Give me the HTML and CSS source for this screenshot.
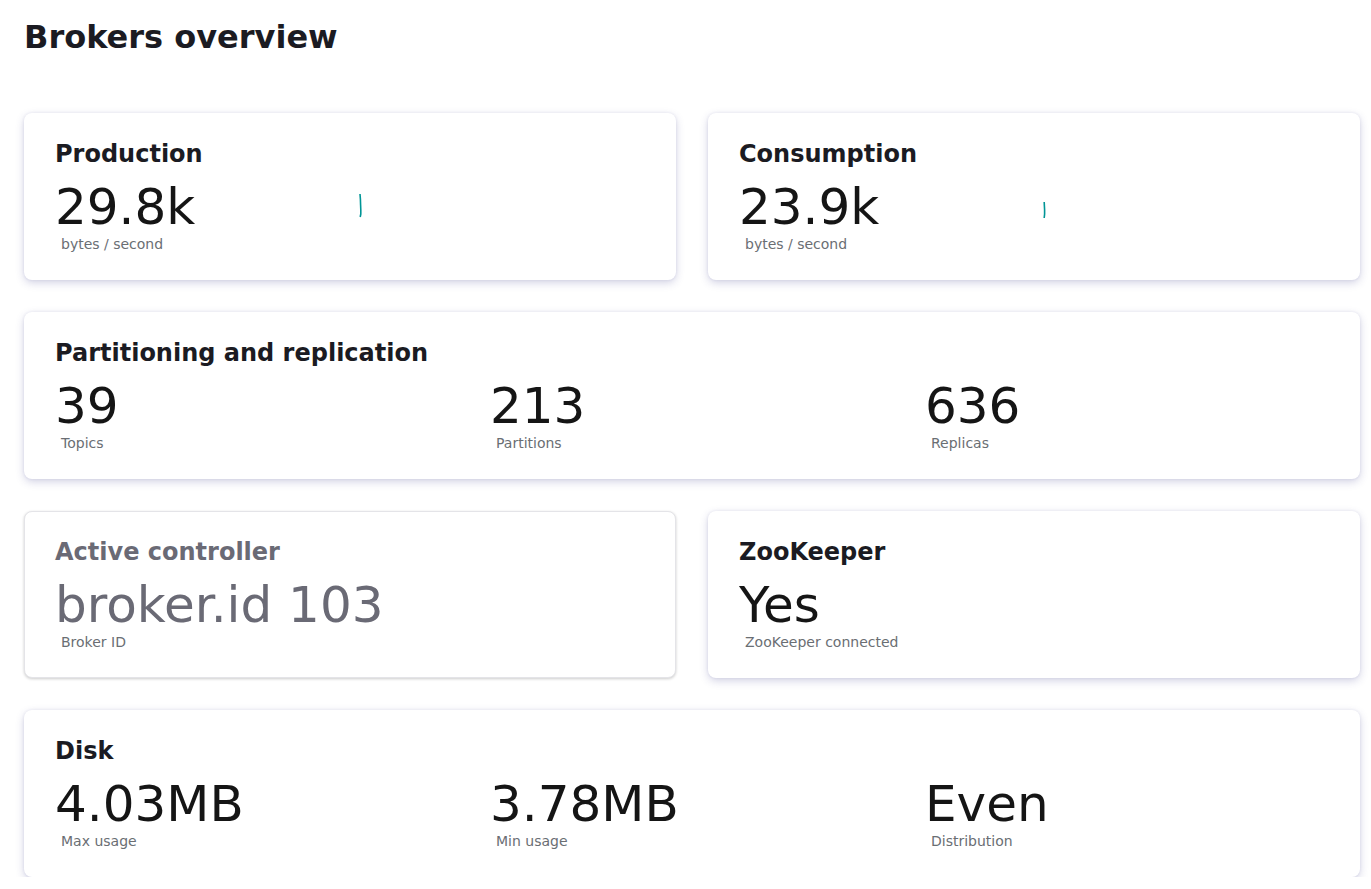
FILE: index.html
```html
<!DOCTYPE html>
<html lang="en">
<head>
<meta charset="utf-8">
<title>Brokers overview</title>
<link rel="stylesheet" href="styles.css">
</head>
<body>
<main class="page">
  <h1 class="page-title">Brokers overview</h1>
  <div class="grid">
    <section class="card">
      <h2 class="card-title">Production</h2>
      <div class="split">
        <div>
          <div class="value">29.8k</div>
          <div class="sub">bytes / second</div>
        </div>
        <div class="chart">
          <svg class="spark spark-a" width="6" height="26" viewBox="0 0 6 26"><polyline points="2,1 2.4,6 2.6,12 2.8,17 2.8,21 2.2,24" fill="none" stroke="#009596" stroke-width="1.6" stroke-linejoin="round"/></svg>
        </div>
      </div>
    </section>
    <section class="card">
      <h2 class="card-title">Consumption</h2>
      <div class="split">
        <div>
          <div class="value">23.9k</div>
          <div class="sub">bytes / second</div>
        </div>
        <div class="chart">
          <svg class="spark spark-b" width="6" height="18" viewBox="0 0 6 18"><polyline points="2.2,1 2.4,5 2.6,9 2.6,13 2.2,17" fill="none" stroke="#009596" stroke-width="1.6" stroke-linejoin="round"/></svg>
        </div>
      </div>
    </section>
    <section class="card wide">
      <h2 class="card-title">Partitioning and replication</h2>
      <div class="cols">
        <div><div class="value">39</div><div class="sub">Topics</div></div>
        <div><div class="value">213</div><div class="sub">Partitions</div></div>
        <div><div class="value">636</div><div class="sub">Replicas</div></div>
      </div>
    </section>
    <section class="card disabled">
      <h2 class="card-title">Active controller</h2>
      <div class="value">broker.id 103</div>
      <div class="sub">Broker ID</div>
    </section>
    <section class="card">
      <h2 class="card-title">ZooKeeper</h2>
      <div class="value">Yes</div>
      <div class="sub">ZooKeeper connected</div>
    </section>
    <section class="card wide">
      <h2 class="card-title">Disk</h2>
      <div class="cols">
        <div><div class="value">4.03MB</div><div class="sub">Max usage</div></div>
        <div><div class="value">3.78MB</div><div class="sub">Min usage</div></div>
        <div><div class="value">Even</div><div class="sub">Distribution</div></div>
      </div>
    </section>
  </div>
</main>
</body>
</html>
```

FILE: styles.css
```css
html, body {
  margin: 0;
  padding: 0;
  background: #ffffff;
}
body {
  font-family: "DejaVu Sans", "Liberation Sans", sans-serif;
  color: #151515;
}
.page {
  padding: 17px 11px 0 24px;
}
.page-title {
  margin: 0 0 56px;
  font-size: 32px;
  line-height: 40px;
  font-weight: 700;
  color: #1b1b22;
}
.grid {
  display: grid;
  grid-template-columns: 1fr 1fr;
  gap: 32px;
}
.card {
  box-sizing: border-box;
  height: 167px;
  padding: 27px 32px 26px 31px;
  background: #fff;
  border-radius: 8px;
  box-shadow: 0 3px 8px rgba(60, 60, 140, 0.22), 0 0 3px rgba(60, 60, 140, 0.1);
}
.card.wide {
  grid-column: 1 / -1;
}
.card.disabled {
  border: 1px solid #e4e4e8;
  padding: 26px 31px 25px 30px;
  box-shadow: 0 1px 3px rgba(0, 0, 0, 0.2);
}
.card-title {
  margin: 0;
  font-size: 24px;
  line-height: 28px;
  font-weight: 700;
  color: #1b1b22;
}
.value {
  margin-top: 14px;
  font-size: 50px;
  line-height: 50px;
  color: #151515;
  white-space: nowrap;
}
.sub {
  margin-top: 2px;
  padding-left: 6px;
  font-size: 14px;
  line-height: 20px;
  color: #6a6e73;
}
.disabled .card-title,
.disabled .value {
  color: #6a6a75;
}
.split {
  display: grid;
  grid-template-columns: 1fr 1fr;
  gap: 16px;
}
.chart {
  position: relative;
}
.spark {
  display: block;
}
.spark-a {
  margin: 25px 0 0 0;
}
.spark-b {
  margin: 33px 0 0 0;
}
.cols {
  display: grid;
  grid-template-columns: repeat(3, 1fr);
  gap: 32px;
}
```
